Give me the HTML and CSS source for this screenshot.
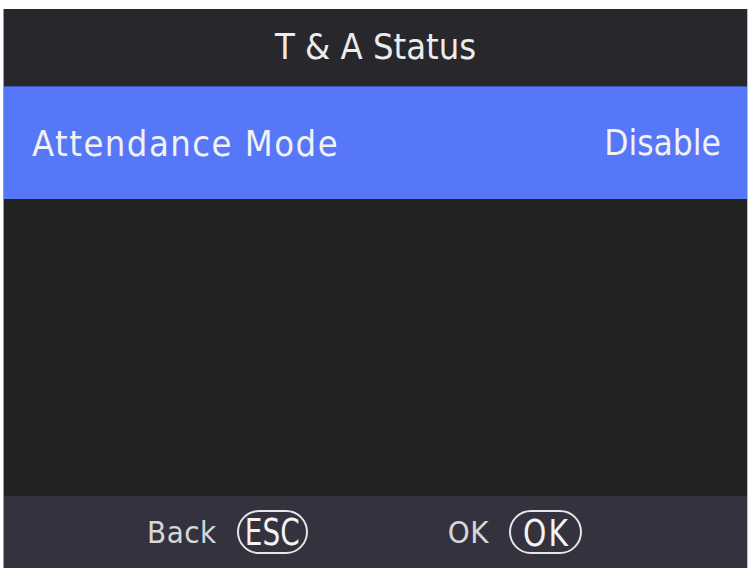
FILE: index.html
```html
<!DOCTYPE html>
<html lang="en">
<head>
<meta charset="utf-8">
<title>T &amp; A Status</title>
<link rel="stylesheet" href="styles.css">
</head>
<body>
<div class="screen">
  <header class="title-bar">T &amp; A Status</header>
  <main class="list">
    <div class="row selected">
      <span class="label">Attendance Mode</span>
      <span class="value">Disable</span>
    </div>
  </main>
  <footer class="keys">
    <div class="key"><span class="key-text">Back</span><span class="pill pill-esc"><span class="pill-text">ESC</span></span></div>
    <div class="key"><span class="key-text">OK</span><span class="pill pill-ok"><span class="pill-text">OK</span></span></div>
  </footer>
</div>
</body>
</html>
```

FILE: styles.css
```css
html, body {
  margin: 0;
  padding: 0;
  background: #ffffff;
}

body {
  width: 753px;
  height: 571px;
  padding: 9px 5px 3px 3px;
  box-sizing: border-box;
  font-family: "DejaVu Sans", "Noto Sans", sans-serif;
  font-stretch: condensed;
  color: #f2f2f2;
}

.screen {
  height: 100%;
  display: flex;
  flex-direction: column;
  background: #222222;
  border-left: 1px solid #9a9a9a;
  border-right: 1px solid #bdbdbd;
}

.title-bar {
  height: 77px;
  background: #28272c;
  display: flex;
  align-items: center;
  justify-content: center;
  padding-bottom: 3px;
  box-sizing: border-box;
  font-size: 36px;
  color: #ececec;
}

.list {
  flex: 1;
  background: #222222;
}

.row {
  height: 113px;
  display: flex;
  align-items: center;
  justify-content: space-between;
  padding: 0 26px 0 28px;
  box-sizing: border-box;
}

.row.selected {
  background: #5577f8;
  border-top: 1px solid #3f56b8;
}

.label {
  font-size: 36px;
  letter-spacing: 1.5px;
}

.value {
  font-size: 35px;
}

.keys {
  height: 72px;
  background: #33323e;
  display: flex;
  align-items: center;
  justify-content: center;
  gap: 140px;
  padding-right: 22px;
  color: #d6d6d6;
}

.key {
  display: flex;
  align-items: center;
  gap: 20px;
}

.key-text {
  font-size: 31px;
  letter-spacing: 0.5px;
}

.pill {
  height: 44px;
  box-sizing: border-box;
  border: 2px solid #e6e6e6;
  border-radius: 22px;
  display: flex;
  align-items: center;
  justify-content: center;
  font-size: 31px;
  color: #f4f4f4;
}

.pill-esc {
  width: 71px;
}

.pill-ok {
  width: 73px;
  font-size: 33px;
}

.pill-ok .pill-text {
  letter-spacing: 2px;
  margin-left: 2px;
  transform: scaleY(1.15);
}

.pill-text {
  display: inline-block;
  transform: scaleY(1.22);
}
```
